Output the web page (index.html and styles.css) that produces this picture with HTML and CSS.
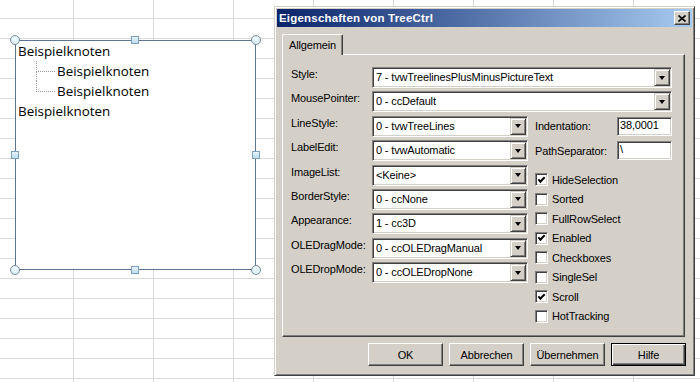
FILE: index.html
```html
<!DOCTYPE html>
<html lang="de">
<head>
    <meta charset="UTF-8">
    <meta name="viewport" content="width=device-width, initial-scale=1.0">
    <title>Eigenschaften von TreeCtrl</title>
    <link rel="stylesheet" href="styles.css">
</head>
<body>

<div class="sheet">

    <!-- TreeCtrl auf dem Tabellenblatt -->
    <div class="tree-box">
        <span class="handle round h-tl"></span>
        <span class="handle square h-tc"></span>
        <span class="handle round h-tr"></span>
        <span class="handle square h-ml"></span>
        <span class="handle square h-mr"></span>
        <span class="handle round h-bl"></span>
        <span class="handle square h-bc"></span>
        <span class="handle round h-br"></span>

        <ul class="tree">
            <li class="node">Beispielknoten
                <ul class="children">
                    <li class="child">Beispielknoten</li>
                    <li class="child">Beispielknoten</li>
                </ul>
            </li>
            <li class="node">Beispielknoten</li>
        </ul>
    </div>

    <!-- Eigenschaften-Dialog -->
    <div class="dialog">
        <div class="titlebar">
            <span class="title">Eigenschaften von TreeCtrl</span>
            <span class="close-btn">
                <svg width="8" height="7" viewBox="0 0 8 7"><path d="M0.5 0.5 L7.5 6.5 M7.5 0.5 L0.5 6.5" stroke="#000" stroke-width="1.6" fill="none"/></svg>
            </span>
        </div>

        <div class="dialog-body">
            <div class="tabs">
                <div class="tab active">Allgemein</div>
            </div>

            <div class="tab-panel">
                <div class="prop-row">
                    <span class="prop-label">Style:</span>
                    <div class="combo wide"><span class="combo-text">7 - tvwTreelinesPlusMinusPictureText</span><span class="drop"></span></div>
                </div>
                <div class="prop-row">
                    <span class="prop-label">MousePointer:</span>
                    <div class="combo wide"><span class="combo-text">0 - ccDefault</span><span class="drop"></span></div>
                </div>

                <div class="split">
                    <div class="props">
                        <div class="prop-row">
                            <span class="prop-label">LineStyle:</span>
                            <div class="combo"><span class="combo-text">0 - tvwTreeLines</span><span class="drop"></span></div>
                        </div>
                        <div class="prop-row">
                            <span class="prop-label">LabelEdit:</span>
                            <div class="combo"><span class="combo-text">0 - tvwAutomatic</span><span class="drop"></span></div>
                        </div>
                        <div class="prop-row">
                            <span class="prop-label">ImageList:</span>
                            <div class="combo"><span class="combo-text">&lt;Keine&gt;</span><span class="drop"></span></div>
                        </div>
                        <div class="prop-row">
                            <span class="prop-label">BorderStyle:</span>
                            <div class="combo"><span class="combo-text">0 - ccNone</span><span class="drop"></span></div>
                        </div>
                        <div class="prop-row">
                            <span class="prop-label">Appearance:</span>
                            <div class="combo"><span class="combo-text">1 - cc3D</span><span class="drop"></span></div>
                        </div>
                        <div class="prop-row">
                            <span class="prop-label">OLEDragMode:</span>
                            <div class="combo"><span class="combo-text">0 - ccOLEDragManual</span><span class="drop"></span></div>
                        </div>
                        <div class="prop-row">
                            <span class="prop-label">OLEDropMode:</span>
                            <div class="combo"><span class="combo-text">0 - ccOLEDropNone</span><span class="drop"></span></div>
                        </div>
                    </div>

                    <div class="side">
                        <div class="field">
                            <span class="field-label">Indentation:</span>
                            <span class="textbox">38,0001</span>
                        </div>
                        <div class="field">
                            <span class="field-label">PathSeparator:</span>
                            <span class="textbox">\</span>
                        </div>

                        <div class="checks">
                            <div class="check"><span class="box checked"></span>HideSelection</div>
                            <div class="check"><span class="box"></span>Sorted</div>
                            <div class="check"><span class="box"></span>FullRowSelect</div>
                            <div class="check"><span class="box checked"></span>Enabled</div>
                            <div class="check"><span class="box"></span>Checkboxes</div>
                            <div class="check"><span class="box"></span>SingleSel</div>
                            <div class="check"><span class="box checked"></span>Scroll</div>
                            <div class="check"><span class="box"></span>HotTracking</div>
                        </div>
                    </div>
                </div>
            </div>

            <div class="buttons">
                <span class="btn">OK</span>
                <span class="btn">Abbrechen</span>
                <span class="btn">Übernehmen</span>
                <span class="btn default">Hilfe</span>
            </div>
        </div>
    </div>

</div>

</body>
</html>
```

FILE: styles.css
```css
body {
    margin: 0;
    width: 700px;
    height: 382px;
    overflow: hidden;
    background-color: #fff;
}

/* Tabellenblatt mit Gitterlinien */
.sheet {
    position: relative;
    width: 700px;
    height: 382px;
    background-image:
        linear-gradient(to right, #dadada 1px, transparent 1px),
        linear-gradient(to bottom, #dadada 1px, transparent 1px);
    background-size: 80px 20px;
    background-position: 73px 18px;
}

/* ---------- TreeCtrl ---------- */
.tree-box {
    position: absolute;
    left: 15px;
    top: 40px;
    width: 241px;
    height: 230px;
    box-sizing: border-box;
    border: 1px solid #5b7394;
    background: #fff;
    font-family: "Open Sans", "Noto Sans", sans-serif;
    font-size: 13.4px;
    color: #000;
}

.handle {
    position: absolute;
    box-sizing: border-box;
    z-index: 2;
}

.handle.round {
    width: 10px;
    height: 10px;
    border-radius: 50%;
    border: 1px solid #7b8c99;
    background: radial-gradient(circle at 50% 35%, #f2fbfd 0%, #cdeaf2 100%);
}

.handle.square {
    width: 8px;
    height: 8px;
    border: 1px solid #7c9fc2;
    background: linear-gradient(#e6f4fb, #bcdcef);
}

.h-tl { left: -6px; top: -6px; }
.h-tr { right: -6px; top: -6px; }
.h-bl { left: -6px; bottom: -6px; }
.h-br { right: -6px; bottom: -6px; }
.h-tc { left: 115px; top: -5px; }
.h-bc { left: 115px; bottom: -5px; }
.h-ml { left: -5px; top: 110px; }
.h-mr { right: -5px; top: 110px; }

.tree,
.children {
    list-style: none;
    margin: 0;
    padding: 0;
}

.node {
    line-height: 20px;
    padding-left: 2px;
}

.children {
    margin-left: 18px;
}

.child {
    position: relative;
    padding-left: 21px;
}

.child::before {
    content: "";
    position: absolute;
    left: 0;
    top: 0;
    width: 18px;
    height: 10px;
    border-left: 1px dotted #9a9a9a;
    border-bottom: 1px dotted #9a9a9a;
}

.child:not(:last-child)::after {
    content: "";
    position: absolute;
    left: 0;
    top: 10px;
    bottom: 0;
    border-left: 1px dotted #9a9a9a;
}

/* ---------- Dialog ---------- */
.dialog {
    position: absolute;
    left: 274px;
    top: 6px;
    width: 421px;
    height: 370px;
    box-sizing: border-box;
    padding: 2px;
    background: #d4d0c8;
    border: 1px solid;
    border-color: #d4d0c8 #404040 #404040 #d4d0c8;
    box-shadow: inset 1px 1px #fff, inset -1px -1px #808080;
    font-family: "Liberation Sans", Arial, sans-serif;
    font-size: 11px;
    letter-spacing: -0.15px;
    color: #000;
}

.titlebar {
    display: flex;
    align-items: center;
    justify-content: space-between;
    height: 18px;
    padding: 0 2px 0 2px;
    background: linear-gradient(to right, #0a246a, #a6caf0);
}

.title {
    color: #fff;
    font-weight: bold;
    font-size: 11.5px;
    letter-spacing: 0.2px;
    white-space: nowrap;
}

.close-btn {
    display: flex;
    align-items: center;
    justify-content: center;
    width: 16px;
    height: 14px;
    box-sizing: border-box;
    background: #d4d0c8;
    border: 1px solid;
    border-color: #fff #404040 #404040 #fff;
    box-shadow: inset -1px -1px #808080;
}

.dialog-body {
    padding: 7px 5px 0 5px;
}

.tabs {
    display: flex;
    height: 20px;
}

.tab {
    position: relative;
    z-index: 1;
    height: 21px;
    box-sizing: border-box;
    padding: 4px 6px 0 6px;
    background: #d4d0c8;
    border-top: 1px solid #fff;
    border-left: 1px solid #fff;
    border-right: 1px solid #404040;
    box-shadow: inset -1px 0 #808080;
    border-radius: 2px 2px 0 0;
}

.tab-panel {
    width: 403px;
    height: 283px;
    box-sizing: border-box;
    padding: 12px 8px 0 8px;
    border: 1px solid;
    border-color: #fff #404040 #404040 #fff;
    box-shadow: inset -1px -1px #808080;
}

.prop-row {
    display: flex;
    align-items: flex-start;
    height: 21px;
    margin-bottom: 3.4px;
}

.prop-label {
    width: 81px;
    flex-shrink: 0;
    line-height: 13px;
    padding-top: 1px;
}

.combo {
    display: flex;
    width: 156px;
    height: 21px;
    box-sizing: border-box;
    padding: 1px;
    background: #fff;
    border: 1px solid;
    border-color: #808080 #fff #fff #808080;
    box-shadow: inset 1px 1px #404040, inset -1px -1px #d4d0c8;
}

.combo.wide {
    width: 300px;
}

.combo-text {
    flex: 1;
    padding-left: 2px;
    line-height: 17px;
    white-space: nowrap;
    overflow: hidden;
}

.drop {
    display: flex;
    align-items: center;
    justify-content: center;
    width: 16px;
    height: 17px;
    box-sizing: border-box;
    background: #d4d0c8;
    border: 1px solid;
    border-color: #d4d0c8 #404040 #404040 #d4d0c8;
    box-shadow: inset 1px 1px #fff, inset -1px -1px #808080;
}

.drop::after {
    content: "";
    border-left: 3.5px solid transparent;
    border-right: 3.5px solid transparent;
    border-top: 4px solid #000;
}

.split {
    display: flex;
    gap: 7px;
}

.props {
    width: 237px;
}

.side {
    width: 137px;
}

.field {
    display: flex;
    align-items: center;
    height: 21px;
    margin-bottom: 3.4px;
}

.field-label {
    width: 82px;
    flex-shrink: 0;
}

.textbox {
    width: 55px;
    height: 19px;
    box-sizing: border-box;
    padding-left: 2px;
    line-height: 15px;
    background: #fff;
    border: 1px solid;
    border-color: #808080 #fff #fff #808080;
    box-shadow: inset 1px 1px #404040, inset -1px -1px #d4d0c8;
}

.checks {
    margin-top: 9px;
}

.check {
    display: flex;
    align-items: center;
    gap: 4px;
    height: 19.5px;
}

.box {
    display: flex;
    align-items: center;
    justify-content: center;
    width: 13px;
    height: 13px;
    box-sizing: border-box;
    background: #fff;
    border: 1px solid;
    border-color: #808080 #fff #fff #808080;
    box-shadow: inset 1px 1px #404040, inset -1px -1px #d4d0c8;
}

.box.checked::after {
    content: "";
    width: 5px;
    height: 2px;
    margin-top: -2px;
    border-left: 2px solid #000;
    border-bottom: 2px solid #000;
    transform: rotate(-45deg);
}

.buttons {
    display: flex;
    justify-content: flex-end;
    gap: 6px;
    margin-top: 6px;
    padding-right: 1px;
}

.btn {
    display: flex;
    align-items: center;
    justify-content: center;
    width: 75px;
    height: 23px;
    box-sizing: border-box;
    background: #d4d0c8;
    border: 1px solid;
    border-color: #fff #404040 #404040 #fff;
    box-shadow: inset -1px -1px #808080;
}

.btn.default {
    border: 1px solid #000;
    box-shadow: inset 1px 1px #fff, inset -1px -1px #404040, inset -2px -2px #808080;
}
```
